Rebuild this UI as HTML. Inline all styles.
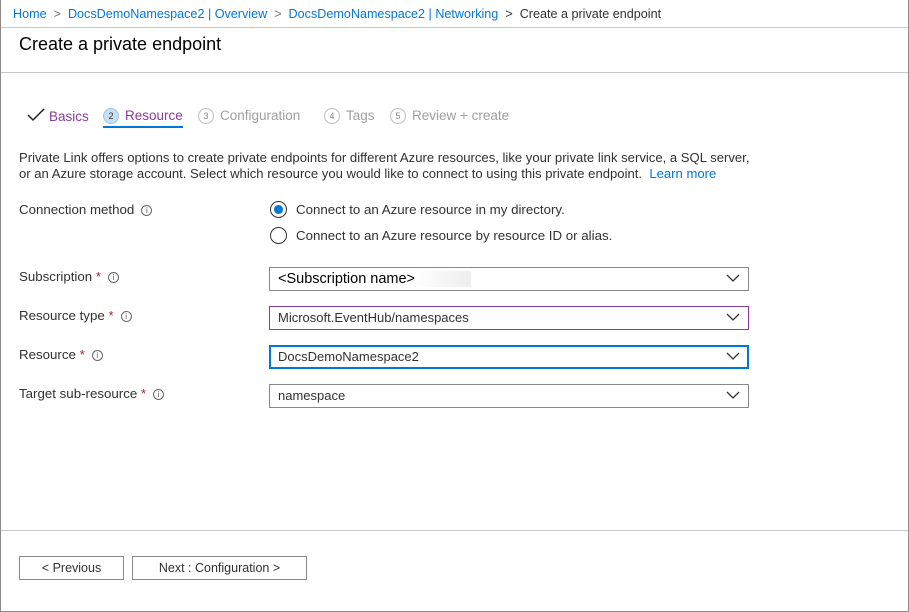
<!DOCTYPE html>
<html><head><meta charset="utf-8"><style>
*{margin:0;padding:0;box-sizing:border-box}
body{width:909px;height:612px;background:#fff;font-family:"Liberation Sans",sans-serif;color:#323130;position:relative;overflow:hidden;font-size:13px}
.a{position:absolute;white-space:nowrap}
.frame{position:absolute;left:0;top:0;width:909px;height:612px;border:1px solid #8a8a8a;border-top:none}
.hl{position:absolute;left:1px;right:1px;height:1px;background:#c8c8c8}
.bc{color:#0078d4;font-size:12.6px}
.sep{color:#777}
.lbl{font-size:13.3px}
.req{color:#a4262c}
.i{display:inline-block;width:11px;height:11px;border:1px solid #666;border-radius:50%;font-size:8px;line-height:9px;text-align:center;color:#555;vertical-align:1px;margin-left:7px}
.box{position:absolute;left:269px;width:480px;height:24px;border:1px solid #8a8886;font-size:13px;padding-left:8px;line-height:22px}
.chev{position:absolute;right:8px;top:6px}
.step{font-size:13.5px}
.circ{display:inline-block;width:16px;height:16px;border:1px solid #bbb;border-radius:50%;font-size:9px;line-height:14px;text-align:center;color:#888;margin-right:6px;vertical-align:1px}
.btn{position:absolute;top:556px;height:24px;border:1px solid #8a8886;font-size:12.5px;text-align:center;line-height:22px}
</style></head><body>
<div class="frame"></div>
<div class="a bc" style="left:13px;top:7px">Home <span class="sep">&nbsp;&gt;&nbsp;</span> DocsDemoNamespace2 | Overview <span class="sep">&nbsp;&gt;&nbsp;</span> DocsDemoNamespace2 | Networking <span class="sep" style="color:#333">&nbsp;&gt;&nbsp;</span> <span style="color:#323130">Create a private endpoint</span></div>
<div class="hl" style="top:27px"></div>
<div class="a" style="left:19px;top:34px;font-size:18px;color:#000">Create a private endpoint</div>
<div class="hl" style="top:72px"></div>

<div class="a step" style="left:27px;top:108px;color:#8a3c9a"><svg width="18" height="14" style="vertical-align:-1px;margin-right:4px"><path d="M1 7 L6 12 L17 1" stroke="#222" stroke-width="1.5" fill="none"/></svg>Basics</div>
<div class="a step" style="left:103px;top:108px;color:#8a3c9a"><span class="circ" style="background:#c7e0f4;border-color:#9cc7ea;color:#333">2</span>Resource</div>
<div class="a" style="left:103px;top:126px;width:80px;height:2px;background:#0078d4"></div>
<div class="a step" style="left:198px;top:108px;color:#a19f9d"><span class="circ">3</span>Configuration</div>
<div class="a step" style="left:324px;top:108px;color:#a19f9d"><span class="circ">4</span>Tags</div>
<div class="a step" style="left:390px;top:108px;color:#a19f9d"><span class="circ">5</span>Review + create</div>

<div class="a" style="left:19px;top:150px;font-size:13.1px;line-height:16px">Private Link offers options to create private endpoints for different Azure resources, like your private link service, a SQL server,<br>or an Azure storage account. Select which resource you would like to connect to using this private endpoint. &nbsp;<span style="color:#0078d4">Learn more</span></div>

<div class="a lbl" style="left:19px;top:202px">Connection method<span class="i">i</span></div>
<div class="a" style="left:270px;top:201px;width:17px;height:17px;border:1px solid #333;border-radius:50%"><div style="position:absolute;left:3px;top:3px;width:9px;height:9px;border-radius:50%;background:#0078d4"></div></div>
<div class="a lbl" style="left:296px;top:202px">Connect to an Azure resource in my directory.</div>
<div class="a" style="left:270px;top:227px;width:17px;height:17px;border:1px solid #333;border-radius:50%"></div>
<div class="a lbl" style="left:296px;top:228px">Connect to an Azure resource by resource ID or alias.</div>

<div class="a lbl" style="left:19px;top:269px">Subscription <span class="req">*</span><span class="i">i</span></div>
<div class="box" style="top:267px;font-size:14.5px;color:#000"><span style="background:linear-gradient(90deg,#fff 70%,#eee)">&lt;Subscription name&gt;&nbsp;&nbsp;&nbsp;&nbsp;&nbsp;&nbsp;&nbsp;&nbsp;&nbsp;&nbsp;&nbsp;&nbsp;&nbsp;&nbsp;</span><svg class="chev" width="14" height="9"><path d="M1 1 L7 7 L13 1" stroke="#333" stroke-width="1.3" fill="none"/></svg></div>

<div class="a lbl" style="left:19px;top:308px">Resource type <span class="req">*</span><span class="i">i</span></div>
<div class="box" style="top:306px;border-color:#8a3c9a">Microsoft.EventHub/namespaces<svg class="chev" width="14" height="9"><path d="M1 1 L7 7 L13 1" stroke="#333" stroke-width="1.3" fill="none"/></svg></div>

<div class="a lbl" style="left:19px;top:347px">Resource <span class="req">*</span><span class="i">i</span></div>
<div class="box" style="top:345px;border:2px solid #0078d4;padding-left:7px;line-height:20px">DocsDemoNamespace2<svg class="chev" width="14" height="9" style="top:5px;right:7px"><path d="M1 1 L7 7 L13 1" stroke="#333" stroke-width="1.3" fill="none"/></svg></div>

<div class="a lbl" style="left:19px;top:386px">Target sub-resource <span class="req">*</span><span class="i">i</span></div>
<div class="box" style="top:384px">namespace<svg class="chev" width="14" height="9"><path d="M1 1 L7 7 L13 1" stroke="#333" stroke-width="1.3" fill="none"/></svg></div>

<div class="hl" style="top:530px"></div>
<div class="btn" style="left:19px;width:105px">&lt; Previous</div>
<div class="btn" style="left:132px;width:175px">Next : Configuration &gt;</div>
</body></html>
